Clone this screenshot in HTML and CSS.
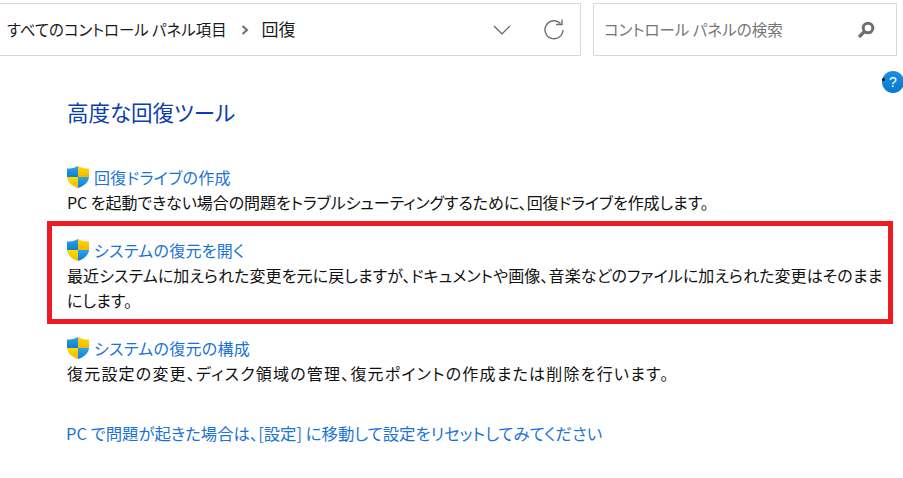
FILE: index.html
```html
<!DOCTYPE html>
<html lang="ja">
<head>
  <meta charset="UTF-8">
  <title>回復</title>
  <link rel="stylesheet" href="styles.css">
</head>
<body>
  <svg class="defs" width="0" height="0">
    <defs>
      <linearGradient id="shieldBlue" x1="0" y1="0" x2="0" y2="1">
        <stop offset="0" stop-color="#2aa5e8"/>
        <stop offset="1" stop-color="#0f7fd0"/>
      </linearGradient>
      <linearGradient id="shieldYellow" x1="0" y1="0" x2="0" y2="1">
        <stop offset="0" stop-color="#ffdc00"/>
        <stop offset="1" stop-color="#f7b500"/>
      </linearGradient>
      <symbol id="shield" viewBox="0 0 22 22">
        <path d="M11 0C8.500 1.600 4 2.600 0 2.600V11H11Z" fill="url(#shieldBlue)"/>
        <path d="M11 0C13.500 1.600 18 2.600 22 2.600V11H11Z" fill="url(#shieldYellow)"/>
        <path d="M0 11C0.300 16 5 20 11 22V11Z" fill="url(#shieldYellow)"/>
        <path d="M22 11C21.700 16 17 20 11 22V11Z" fill="url(#shieldBlue)"/>
      </symbol>
    </defs>
  </svg>

  <div class="toolbar">
    <div class="address">
      <div class="crumbs">
        <span>すべてのコントロール パネル項目</span>
        <svg class="crumb-sep" width="8" height="10" viewBox="0 0 8 10"><path d="M1.500 1L6 5L1.500 9" fill="none" stroke="#6d6d6d" stroke-width="2"/></svg>
        <span class="crumb-current">回復</span>
      </div>
      <svg class="chevron" width="18" height="10" viewBox="0 0 18 10"><path d="M1 1L9 9L17 1" fill="none" stroke="#5f5f5f" stroke-width="1.200"/></svg>
      <svg class="refresh" width="22" height="22" viewBox="0 0 22 22"><path d="M17.500 4.500A9 9 0 1 0 20 11" fill="none" stroke="#6f6f6f" stroke-width="1.400"/><path d="M13 5.500H19V0.500" fill="none" stroke="#6f6f6f" stroke-width="1.400"/></svg>
    </div>
    <div class="search">
      <span class="search-hint">コントロール パネルの検索</span>
      <svg width="18" height="18" viewBox="0 0 18 18"><circle cx="11" cy="7" r="4.800" fill="none" stroke="#6f6f6f" stroke-width="3"/><path d="M7.500 10.500L2 16" stroke="#6f6f6f" stroke-width="3.200"/></svg>
    </div>
  </div>

  <div class="help"><i class="help-dot"></i><span>?</span></div>

  <main class="content">
    <h1>高度な回復ツール</h1>

    <section class="item first">
      <a class="link"><svg class="shield"><use href="#shield"/></svg>回復ドライブの作成</a>
      <p class="tight">PC を起動できない場合の問題をトラブルシューティングするために、回復ドライブを作成します。</p>
    </section>

    <section class="item marked">
      <a class="link"><svg class="shield"><use href="#shield"/></svg>システムの復元を開く</a>
      <p>最近システムに加えられた変更を元に戻しますが、ドキュメントや画像、音楽などのファイルに加えられた変更はそのままにします。</p>
    </section>

    <section class="item">
      <a class="link"><svg class="shield"><use href="#shield"/></svg>システムの復元の構成</a>
      <p class="wide">復元設定の変更、ディスク領域の管理、復元ポイントの作成または削除を行います。</p>
    </section>

    <a class="reset">PC で問題が起きた場合は、[設定] に移動して設定をリセットしてみてください</a>
  </main>
</body>
</html>
```

FILE: styles.css
```css
* { box-sizing: border-box; }
html, body {
  height: 478px;
  overflow: hidden;
}
body {
  margin: 0;
  background: #fff;
  color: #111;
  font-family: "Noto Sans CJK JP", "Noto Sans", sans-serif;
  font-size: 16px;
  letter-spacing: 0.1px;
  font-feature-settings: "palt";
  position: relative;
}
.defs {
  position: absolute;
}
.toolbar {
  display: flex;
  gap: 12px;
  padding-top: 3px;
  letter-spacing: 0;
}
.address, .search {
  height: 53px;
  border: 1px solid #d9d9d9;
  display: flex;
  align-items: center;
}
.address {
  width: 581px;
  border-left: none;
  padding-left: 7px;
}
.crumbs {
  display: flex;
  align-items: center;
  flex: 1;
  font-size: 15.400px;
  color: #1a1a1a;
  margin-top: -2px;
}
.crumb-current {
  font-size: 17px;
}
.crumb-sep {
  margin: 2px 13px 0 14px;
}
.chevron {
  margin-right: 32px;
}
.refresh {
  margin-right: 15px;
}
.search {
  width: 304px;
  padding: 0 21px 0 10px;
  justify-content: space-between;
}
.search-hint {
  font-size: 15.500px;
  color: #767676;
  margin-top: -1px;
}
.help {
  position: absolute;
  left: 882px;
  top: 71px;
  width: 22px;
  height: 22px;
  border-radius: 50%;
  background: linear-gradient(#1c8fe0, #0a78d0);
  color: #fff;
  font-family: "Liberation Sans", sans-serif;
  font-size: 14px;
  line-height: 22px;
  text-align: center;
}
.help-dot {
  position: absolute;
  left: 0;
  top: 7px;
  width: 3px;
  height: 3px;
  border-radius: 50%;
  background: #111;
}
.content {
  padding: 0 10px 0 47px;
}
h1 {
  margin: 40px 0 0 20px;
  font-size: 21.500px;
  font-weight: 400;
  line-height: 32px;
  letter-spacing: 0;
  color: #0a3db0;
}
.item {
  padding-left: 20px;
}
.item.first {
  margin-top: 36px;
}
.item p {
  margin: 0;
  line-height: 25px;
}
.item p.tight {
  letter-spacing: -0.050px;
}
.item p.wide {
  letter-spacing: 1.200px;
}
.link {
  display: flex;
  align-items: center;
  height: 26px;
  letter-spacing: 0.300px;
  color: #1a73d8;
}
.shield {
  width: 22px;
  height: 22px;
  margin-right: 5px;
}
.marked {
  width: 846px;
  height: 103px;
  margin-top: 6px;
  padding: 11px 5px 0 15px;
  border: 5px solid #ed1c24;
}
.marked + .item {
  margin-top: 11px;
}
.reset {
  display: block;
  margin: 35px 0 0 19px;
  font-size: 16.400px;
  line-height: 24px;
  letter-spacing: 0;
  color: #1a73d8;
}
```
